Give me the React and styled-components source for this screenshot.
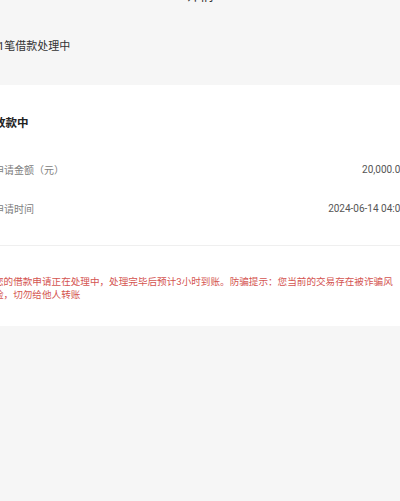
import React from "react";
import styled, { createGlobalStyle } from "styled-components";

const GlobalStyle = createGlobalStyle`
  html, body {
    margin: 0;
    padding: 0;
    background: #f6f6f6;
    overflow: hidden;
  }
  body {
    font-family: Roboto, "Noto Sans CJK SC", sans-serif;
  }
`;

const Page = styled.div`
  margin: 0 -20px;
  min-height: 501px;
  background: #f6f6f6;
`;

const Header = styled.div`
  margin-top: -15px;
  height: 20px;
  line-height: 20px;
  text-align: center;
  font-size: 14px;
  color: #333;
`;

const Summary = styled.div`
  padding: 32px 14px 28px 18px;
  line-height: 20px;
  font-size: 11px;
  color: #333;
`;

const Card = styled.div`
  background: #fff;
`;

const InfoSection = styled.div`
  padding: 28px 14px 17px;
  border-bottom: 1px solid #efefef;
`;

const Status = styled.div`
  line-height: 20px;
  font-size: 11.5px;
  font-weight: 700;
  color: #222;
`;

const Rows = styled.div`
  margin-top: 17px;
`;

const Row = styled.div`
  height: 39px;
  display: flex;
  align-items: center;
  justify-content: space-between;
  font-size: 10px;
`;

const Label = styled.span`
  color: #808080;
`;

const Value = styled.span`
  color: #555;
`;

const Note = styled.div`
  padding: 30px 14px 25px;
  font-size: 9.6px;
  line-height: 12.5px;
  color: #d45450;
`;

const rows = [
  { label: "申请金额（元）", value: "20,000.00" },
  { label: "申请时间", value: "2024-06-14 04:05" }
];

export default function App() {
  return (
    <Page>
      <GlobalStyle />
      <Header>详情</Header>
      <Summary>1笔借款处理中</Summary>
      <Card>
        <InfoSection>
          <Status>放款中</Status>
          <Rows>
            {rows.map(row => (
              <Row key={row.label}>
                <Label>{row.label}</Label>
                <Value>{row.value}</Value>
              </Row>
            ))}
          </Rows>
        </InfoSection>
        <Note>
          您的借款申请正在处理中，处理完毕后预计3小时到账。防骗提示：您当前的交易存在被诈骗风险，切勿给他人转账
        </Note>
      </Card>
    </Page>
  );
}
